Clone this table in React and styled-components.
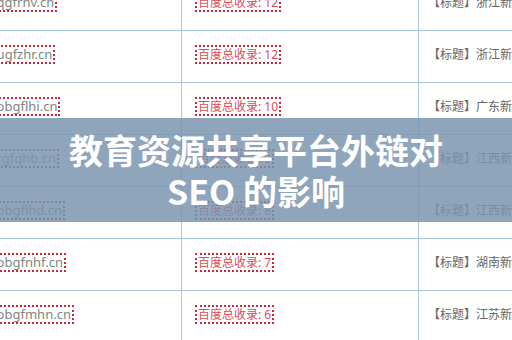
import React from "react";
import styled, { createGlobalStyle } from "styled-components";

const GlobalStyle = createGlobalStyle`
  html, body {
    margin: 0;
    padding: 0;
    background: #ffffff;
  }
  body {
    font-family: "Noto Sans", "Noto Sans CJK SC", sans-serif;
  }
`;

const Frame = styled.div`
  position: relative;
  width: 512px;
  height: 340px;
  overflow: hidden;
  background: #fff;
`;

const Table = styled.div`
  margin-top: -21px;
  display: flex;
  flex-direction: column;
`;

const Row = styled.div`
  display: grid;
  grid-template-columns: 182px 237px 1fr;
  height: 52px;
  border-bottom: 1px solid #a9c7e6;
  box-sizing: border-box;
`;

const Cell = styled.div`
  display: flex;
  align-items: center;
  padding-bottom: 5px;
  box-sizing: border-box;
  overflow: hidden;
  white-space: nowrap;
  border-right: ${(p) => (p.$last ? "none" : "1px solid #a9c7e6")};
  padding-left: ${(p) => p.$pad || 0}px;
`;

const Tag = styled.span`
  display: inline-block;
  font-size: ${(p) => p.$size || 12}px;
  line-height: 15px;
  padding: 0 1px;
  border: 2px dotted #c8283c;
  color: ${(p) => p.$color};
  margin-left: ${(p) => p.$shift || 0}px;
`;

const Title = styled.span`
  font-size: 12px;
  color: #666;
`;

const Band = styled.div`
  position: absolute;
  left: 0;
  right: 0;
  top: 118px;
  height: 104px;
  background: rgba(122, 148, 174, 0.84);
  display: flex;
  align-items: center;
  justify-content: center;
`;

const Heading = styled.h1`
  margin: 0;
  width: 390px;
  text-align: center;
  color: #fff;
  font-family: "Noto Sans CJK SC", "Noto Sans", sans-serif;
  font-weight: 700;
  font-size: 34px;
  line-height: 41px;
  letter-spacing: 0;
`;

const rows = [
  ["www.qgfrhv.cn", 12, "浙江新闻"],
  ["www.ugfzhr.cn", 12, "浙江新闻"],
  ["www.obgflhi.cn", 10, "广东新闻"],
  ["www.rgfqhb.cn", 9, "江西新闻"],
  ["www.obgflhd.cn", 8, "江西新闻"],
  ["www.obgfnhf.cn", 7, "湖南新闻"],
  ["www.obgfmhn.cn", 6, "江苏新闻"],
];

export default function App() {
  return (
    <Frame>
      <GlobalStyle />
      <Table>
        {rows.map(([domain, count, title], i) => (
          <Row key={i}>
            <Cell>
              <Tag $color="#7b8780" $size={13} $shift={-40}>{domain}</Tag>
            </Cell>
            <Cell $pad={13}>
              <Tag $color="#e04a55">百度总收录: {count}</Tag>
            </Cell>
            <Cell $last $pad={9}>
              <Title>【标题】{title}</Title>
            </Cell>
          </Row>
        ))}
      </Table>
      <Band>
        <Heading>教育资源共享平台外链对 SEO 的影响</Heading>
      </Band>
    </Frame>
  );
}
